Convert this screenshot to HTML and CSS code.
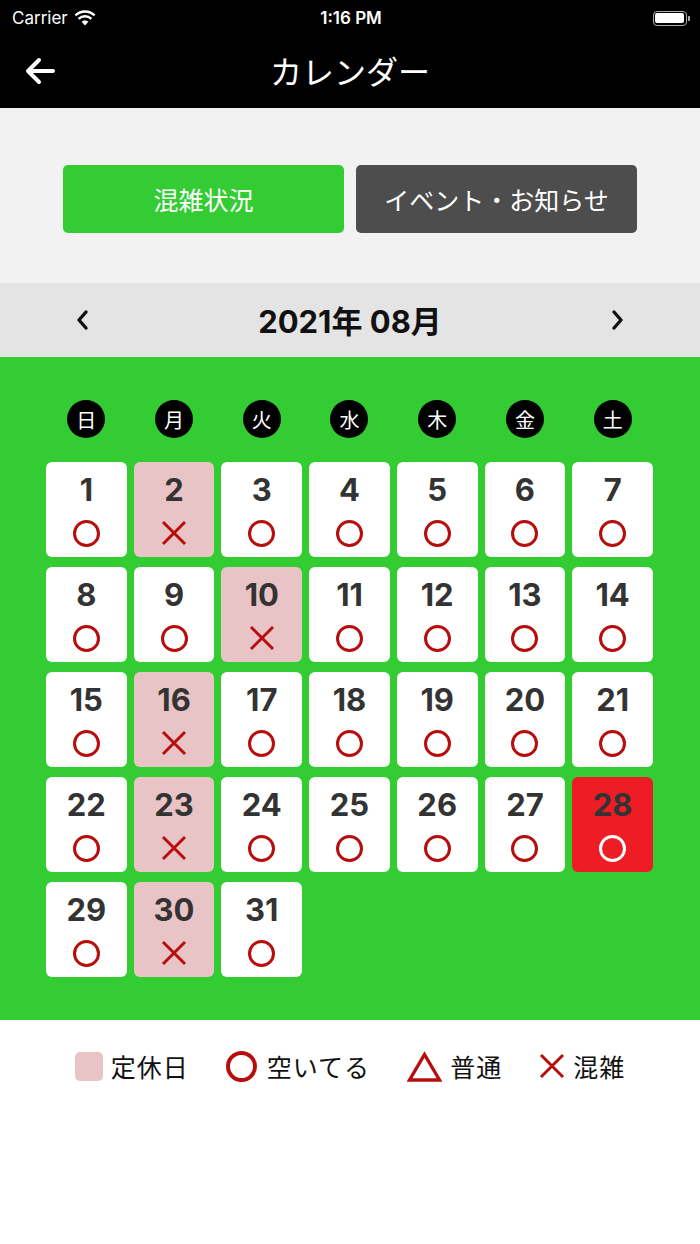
FILE: index.html
```html
<!DOCTYPE html>
<html lang="ja">
<head>
  <meta charset="UTF-8" />
  <meta name="viewport" content="width=device-width, initial-scale=1.0"/>
  <title>カレンダー</title>
  <link rel="stylesheet" href="styles.css">
</head>
<body>
  <header class="top">
    <div class="status-bar">
      <div class="status-left">
        <span>Carrier</span>
        <svg class="wifi" width="22" height="16" viewBox="0 0 22 16">
          <path d="M11 15.5 L7.6 11.8 A5 5 0 0 1 14.4 11.8 Z" fill="#fff"/>
          <path d="M4.6 8.8 A9.4 9.4 0 0 1 17.4 8.8" stroke="#fff" stroke-width="2.4" fill="none"/>
          <path d="M1.4 5.4 A13.8 13.8 0 0 1 20.6 5.4" stroke="#fff" stroke-width="2.4" fill="none"/>
        </svg>
      </div>
      <div class="status-time">1:16 PM</div>
      <div class="status-right">
        <div class="battery"><div class="battery-fill"></div></div>
        <div class="battery-tip"></div>
      </div>
    </div>
    <nav class="nav-bar">
      <svg class="back" width="32" height="28" viewBox="0 0 32 28">
        <path d="M29 14 H5 M15 3 L4 14 L15 25" stroke="#fff" stroke-width="4" fill="none" stroke-linecap="round" stroke-linejoin="round"/>
      </svg>
      <h1>カレンダー</h1>
    </nav>
  </header>

  <section class="tabs">
    <button class="tab tab-active">混雑状況</button>
    <button class="tab tab-dark">イベント・お知らせ</button>
  </section>

  <section class="month-bar">
    <svg width="16" height="22" viewBox="0 0 16 22"><path d="M11 3 L4 11 L11 19" stroke="#111" stroke-width="3.4" fill="none" stroke-linecap="round" stroke-linejoin="round"/></svg>
    <div class="month-title">2021年 08月</div>
    <svg width="16" height="22" viewBox="0 0 16 22"><path d="M5 3 L12 11 L5 19" stroke="#111" stroke-width="3.4" fill="none" stroke-linecap="round" stroke-linejoin="round"/></svg>
  </section>

  <main class="calendar">
    <div class="weekdays">
      <div class="wd"><span>日</span></div>
      <div class="wd"><span>月</span></div>
      <div class="wd"><span>火</span></div>
      <div class="wd"><span>水</span></div>
      <div class="wd"><span>木</span></div>
      <div class="wd"><span>金</span></div>
      <div class="wd"><span>土</span></div>
    </div>
    <div class="days" id="days"></div>
  </main>

  <footer class="legend">
    <div class="legend-item"><span class="swatch"></span>定休日</div>
    <div class="legend-item"><span class="mark-o big"></span>空いてる</div>
    <div class="legend-item">
      <svg width="35" height="31" viewBox="0 0 35 31"><path d="M17.5 3.5 L32.5 29 H2.5 Z" stroke="#b80d0d" stroke-width="3.4" fill="none"/></svg>
      普通
    </div>
    <div class="legend-item">
      <svg width="26" height="26" viewBox="0 0 26 26"><path d="M2 2 L24 24 M24 2 L2 24" stroke="#b80d0d" stroke-width="3" fill="none"/></svg>
      混雑
    </div>
  </footer>

  <script>
    const closed = [2, 10, 16, 23, 30];
    const today = 28;
    const startDay = 0; // Aug 1 2021 is Sunday
    const daysEl = document.getElementById('days');

    for (let i = 0; i < startDay; i++) {
      daysEl.appendChild(document.createElement('div'));
    }

    for (let d = 1; d <= 31; d++) {
      const cell = document.createElement('div');
      cell.className = 'day';
      if (closed.includes(d)) cell.classList.add('closed');
      if (d === today) cell.classList.add('today');

      const mark = closed.includes(d)
        ? '<svg class="mark-x" width="26" height="26" viewBox="0 0 26 26"><path d="M2 2 L24 24 M24 2 L2 24" stroke="#b80d0d" stroke-width="3" fill="none"/></svg>'
        : '<span class="mark-o"></span>';

      cell.innerHTML = `<div class="num">${d}</div><div class="mark">${mark}</div>`;
      daysEl.appendChild(cell);
    }
  </script>
</body>
</html>
```

FILE: styles.css
```css
body {
  margin: 0;
  font-family: "Noto Sans CJK JP", "Noto Sans", sans-serif;
  background-color: #fff;
  color: #111;
}

/* Top header */
.top {
  background-color: #000;
  color: #fff;
  height: 108px;
}

.status-bar {
  height: 36px;
  display: flex;
  align-items: center;
  justify-content: space-between;
  padding: 0 10px 0 12px;
  font-family: "Inter", "Liberation Sans", sans-serif;
  font-size: 17px;
}

.status-left {
  display: flex;
  align-items: center;
  gap: 6px;
  width: 120px;
}

.status-time {
  font-weight: 600;
}

.status-right {
  width: 120px;
  display: flex;
  justify-content: flex-end;
  align-items: center;
}

.battery {
  width: 34px;
  height: 15px;
  border: 1.5px solid #aaa;
  border-radius: 4px;
  padding: 1.5px;
  box-sizing: border-box;
}

.battery-fill {
  width: 100%;
  height: 100%;
  background: #fff;
  border-radius: 2px;
}

.battery-tip {
  width: 2px;
  height: 5px;
  background: #aaa;
  margin-left: 1px;
  border-radius: 0 1px 1px 0;
}

.nav-bar {
  height: 72px;
  display: flex;
  align-items: center;
  justify-content: center;
  position: relative;
}

.back {
  position: absolute;
  left: 24px;
  top: 21px;
}

.nav-bar h1 {
  margin: 0;
  font-size: 32px;
  font-weight: 400;
  margin-top: -5px;
}

/* Tabs */
.tabs {
  background-color: #f2f2f2;
  height: 175px;
  display: flex;
  align-items: center;
  justify-content: center;
  gap: 12px;
  padding-top: 7px;
  box-sizing: border-box;
}

.tab {
  width: 281px;
  height: 68px;
  border: none;
  border-radius: 5px;
  color: #fff;
  font-family: inherit;
  font-size: 25px;
}

.tab-active {
  background-color: #33cc33;
}

.tab-dark {
  background-color: #4d4d4d;
}

/* Month bar */
.month-bar {
  background-color: #e4e4e4;
  height: 74px;
  display: flex;
  align-items: center;
  justify-content: space-between;
  padding: 0 75px;
}

.month-title {
  font-family: "Inter", "Noto Sans CJK JP", sans-serif;
  font-size: 31px;
  font-weight: 700;
  color: #111;
  margin-top: -2px;
}

/* Calendar */
.calendar {
  background-color: #33cc33;
  padding: 43px 47px 43px 46px;
}

.weekdays,
.days {
  display: grid;
  grid-template-columns: repeat(7, 1fr);
  column-gap: 7px;
}

.wd {
  display: flex;
  justify-content: center;
}

.wd span {
  width: 38px;
  height: 38px;
  border-radius: 50%;
  background: #000;
  color: #fff;
  font-size: 20px;
  display: flex;
  align-items: center;
  justify-content: center;
}

.days {
  margin-top: 24px;
  row-gap: 10px;
}

.day {
  background: #fff;
  border-radius: 6px;
  height: 95px;
  display: flex;
  flex-direction: column;
  align-items: center;
}

.day.closed {
  background: #e8c4c6;
}

.day.today {
  background: #ee1c25;
}

.num {
  font-family: "Inter", "Liberation Sans", sans-serif;
  font-weight: 700;
  font-size: 31px;
  color: #333;
  margin-top: 10px;
  line-height: 36px;
}

.mark {
  margin-top: 11px;
  height: 28px;
  display: flex;
  align-items: center;
}

.mark-o {
  display: block;
  width: 21px;
  height: 21px;
  border: 3px solid #b80d0d;
  border-radius: 50%;
}

.day.today .mark-o {
  border-color: #fff;
}

/* Legend */
.legend {
  display: flex;
  justify-content: center;
  align-items: center;
  gap: 37px;
  padding: 28px 0 30px;
  font-size: 25px;
  letter-spacing: 1px;
  color: #111;
}

.legend-item {
  display: flex;
  align-items: center;
  gap: 8px;
}

.swatch {
  width: 28px;
  height: 29px;
  border-radius: 5px;
  background: #e8c4c6;
}

.mark-o.big {
  width: 23px;
  height: 23px;
  border-width: 4px;
  margin-right: 2px;
}
```
